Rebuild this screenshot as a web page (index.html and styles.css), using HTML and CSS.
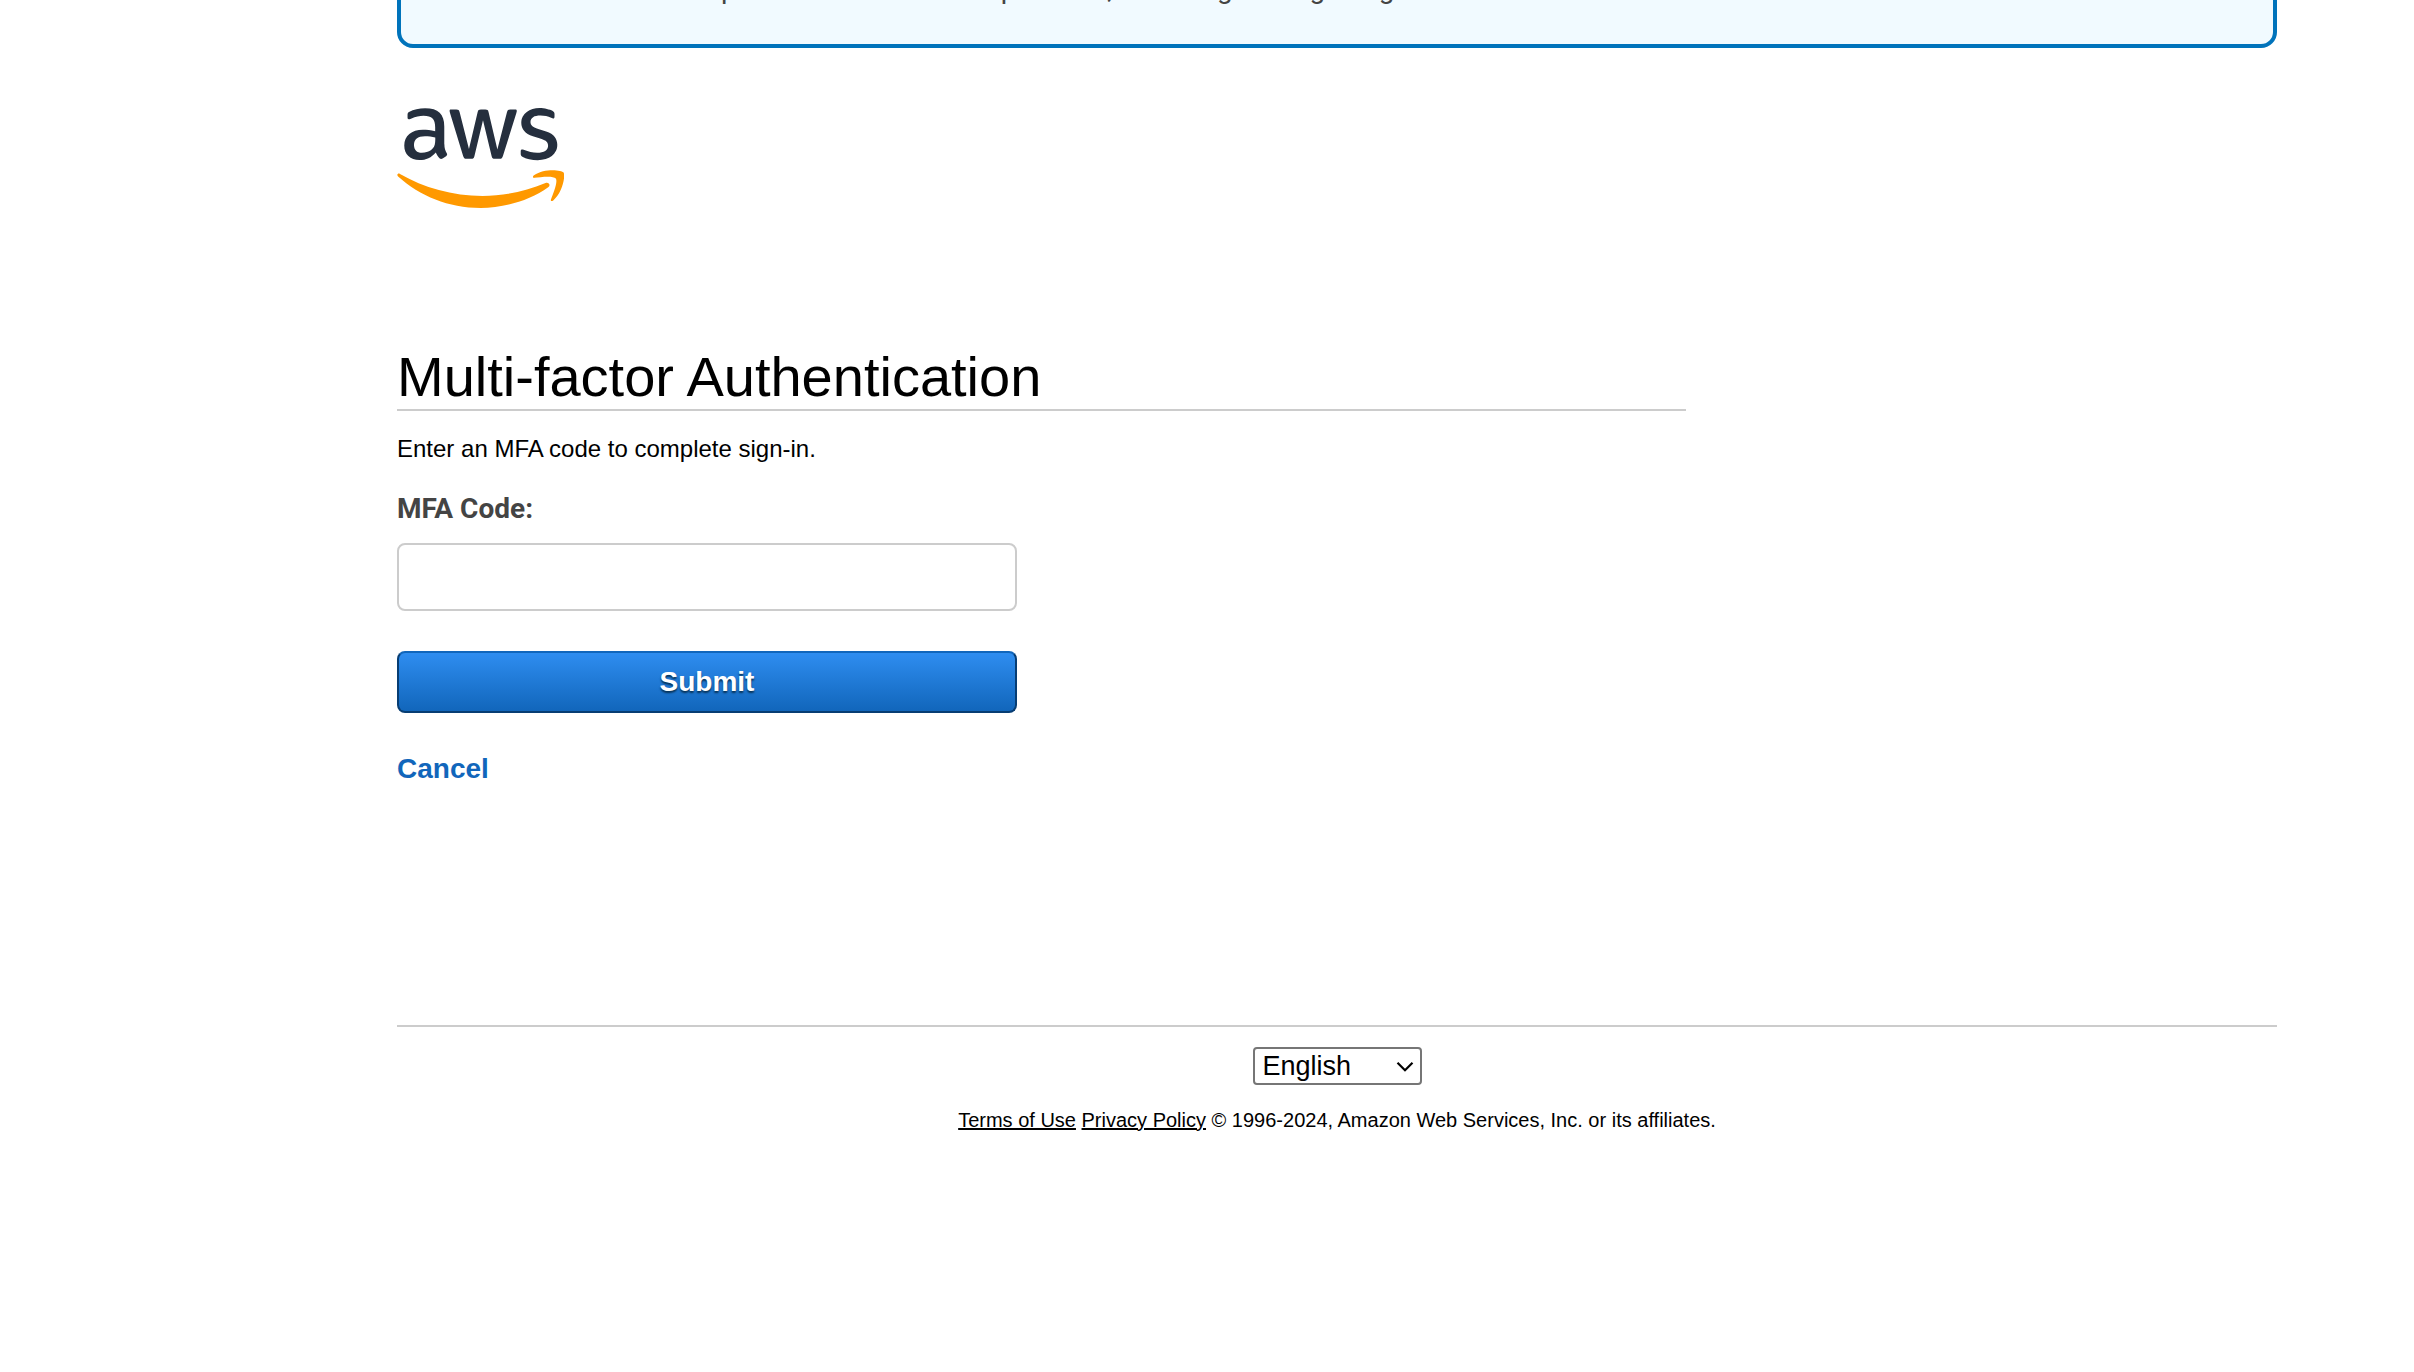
FILE: index.html
```html
<!DOCTYPE html>
<html lang="en">
<head>
<meta charset="utf-8">
<meta name="viewport" content="width=device-width, initial-scale=1">
<title>Multi-factor Authentication</title>
<link rel="stylesheet" href="styles.css">
</head>
<body>
<div class="page">
  <aside class="notice">
    <p class="notice-text">We continue to improve the AWS MFA experience, including setting the ground rules.</p>
  </aside>
  <header class="brand">
    <svg class="logo" viewBox="1 1 301 180" role="img" aria-label="aws">
      <g fill="#252f3e">
        <path d="M86.4,66.4c0,3.7,0.4,6.7,1.1,8.9c0.8,2.2,1.8,4.6,3.2,7.2c0.5,0.8,0.7,1.6,0.7,2.3c0,1-0.6,2-1.9,3l-6.3,4.2c-0.9,0.6-1.8,0.9-2.6,0.9c-1,0-2-0.5-3-1.4C76.2,90,75,88.4,74,86.8c-1-1.7-2-3.6-3.1-5.9c-7.8,9.2-17.6,13.8-29.4,13.8c-8.4,0-15.1-2.4-20-7.2c-4.9-4.8-7.4-11.2-7.4-19.2c0-8.5,3-15.4,9.1-20.6c6.1-5.2,14.2-7.8,24.5-7.8c3.4,0,6.9,0.3,10.6,0.8c3.7,0.5,7.5,1.3,11.5,2.2v-7.3c0-7.6-1.6-12.9-4.7-16c-3.2-3.1-8.6-4.6-16.3-4.6c-3.5,0-7.1,0.4-10.8,1.3c-3.7,0.9-7.3,2-10.8,3.4c-1.6,0.7-2.8,1.1-3.5,1.3c-0.7,0.2-1.2,0.3-1.6,0.3c-1.4,0-2.1-1-2.1-3.1v-4.9c0-1.6,0.2-2.8,0.7-3.5c0.5-0.7,1.4-1.4,2.8-2.1c3.5-1.8,7.7-3.3,12.6-4.5c4.9-1.3,10.1-1.9,15.6-1.9c11.9,0,20.6,2.7,26.2,8.1c5.5,5.4,8.3,13.6,8.3,24.6V66.4z M45.8,81.6c3.3,0,6.7-0.6,10.3-1.8c3.6-1.2,6.8-3.4,9.5-6.4c1.6-1.9,2.8-4,3.4-6.4c0.6-2.4,1-5.3,1-8.7v-4.2c-2.9-0.7-6-1.3-9.2-1.7c-3.2-0.4-6.3-0.6-9.4-0.6c-6.7,0-11.6,1.3-14.9,4c-3.3,2.7-4.9,6.5-4.9,11.5c0,4.7,1.2,8.2,3.7,10.6C37.7,80.4,41.2,81.6,45.8,81.6z"/>
        <path d="M126.1,92.4c-1.8,0-3-0.3-3.8-1c-0.8-0.6-1.5-2-2.1-3.9L96.7,10.2c-0.6-2-0.9-3.3-0.9-4c0-1.6,0.8-2.5,2.4-2.5h9.8c1.9,0,3.2,0.3,3.9,1c0.8,0.6,1.4,2,2,3.9l16.8,66.2l15.6-66.2c0.5-2,1.1-3.3,1.9-3.9c0.8-0.6,2.2-1,4-1h8c1.9,0,3.2,0.3,4,1c0.8,0.6,1.5,2,1.9,3.9l15.8,67l17.3-67c0.6-2,1.3-3.3,2-3.9c0.8-0.6,2.1-1,3.9-1h9.3c1.6,0,2.5,0.8,2.5,2.5c0,0.5-0.1,1-0.2,1.6c-0.1,0.6-0.3,1.4-0.7,2.5l-24.1,77.3c-0.6,2-1.3,3.3-2.1,3.9c-0.8,0.6-2.1,1-3.8,1h-8.6c-1.9,0-3.2-0.3-4-1c-0.8-0.7-1.5-2-1.9-4L156,23l-15.4,64.4c-0.5,2-1.1,3.3-1.9,4c-0.8,0.7-2.2,1-4,1H126.1z"/>
        <path d="M254.6,95.1c-5.2,0-10.4-0.6-15.4-1.8c-5-1.2-8.9-2.5-11.5-4c-1.6-0.9-2.7-1.9-3.1-2.8c-0.4-0.9-0.6-1.9-0.6-2.8v-5.1c0-2.1,0.8-3.1,2.3-3.1c0.6,0,1.2,0.1,1.8,0.3c0.6,0.2,1.5,0.6,2.5,1c3.4,1.5,7.1,2.7,11,3.5c4,0.8,7.9,1.2,11.9,1.2c6.3,0,11.2-1.1,14.6-3.3c3.4-2.2,5.2-5.4,5.2-9.5c0-2.8-0.9-5.1-2.7-7c-1.8-1.9-5.2-3.6-10.1-5.2L246,52c-7.3-2.3-12.7-5.7-16-10.2c-3.3-4.4-5-9.3-5-14.5c0-4.2,0.9-7.9,2.7-11.1c1.8-3.2,4.2-6,7.2-8.2c3-2.3,6.4-4,10.4-5.2c4-1.2,8.2-1.7,12.6-1.7c2.2,0,4.5,0.1,6.7,0.4c2.3,0.3,4.4,0.7,6.5,1.1c2,0.5,3.9,1,5.7,1.6c1.8,0.6,3.2,1.2,4.2,1.8c1.4,0.8,2.4,1.6,3,2.5c0.6,0.8,0.9,1.9,0.9,3.3v4.7c0,2.1-0.8,3.2-2.3,3.2c-0.8,0-2.1-0.4-3.8-1.2c-5.7-2.6-12.1-3.9-19.2-3.9c-5.7,0-10.2,0.9-13.3,2.8c-3.1,1.9-4.7,4.8-4.7,8.9c0,2.8,1,5.2,3,7.1c2,1.9,5.7,3.8,11,5.5l14.2,4.5c7.2,2.3,12.4,5.5,15.5,9.6c3.1,4.1,4.6,8.8,4.6,14c0,4.3-0.9,8.2-2.6,11.6c-1.8,3.4-4.2,6.4-7.3,8.8c-3.1,2.5-6.8,4.3-11.1,5.6C264.4,94.4,259.7,95.1,254.6,95.1z"/>
      </g>
      <g fill="#ff9900">
        <path d="M273.5,143.7c-32.9,24.3-80.7,37.2-121.8,37.2c-57.6,0-109.5-21.3-148.7-56.7c-3.1-2.8-0.3-6.6,3.4-4.4c42.4,24.6,94.7,39.5,148.8,39.5c36.5,0,76.6-7.6,113.5-23.2C274.2,133.6,278.9,139.7,273.5,143.7z"/>
        <path d="M287.2,128.1c-4.2-5.4-27.8-2.6-38.5-1.3c-3.2,0.4-3.7-2.4-0.8-4.5c18.8-13.2,49.7-9.4,53.3-5c3.6,4.5-1,35.4-18.6,50.2c-2.7,2.3-5.3,1.1-4.1-1.9C282.5,155.7,291.4,133.4,287.2,128.1z"/>
      </g>
    </svg>
  </header>
  <main class="content">
    <h1 class="title">Multi-factor Authentication</h1>
    <p class="intro">Enter an MFA code to complete sign-in.</p>
    <form class="form">
      <label class="label" for="mfa">MFA Code:</label>
      <input class="field" id="mfa" type="text" autocomplete="off">
      <button class="submit" type="submit">Submit</button>
    </form>
    <a class="cancel" href="#">Cancel</a>
  </main>
  <footer class="footer">
    <div class="language">
      <select class="select" aria-label="Language">
        <option>English</option>
        <option>Español</option>
        <option>Français</option>
      </select>
      <svg class="chevron" viewBox="0 0 18 12" aria-hidden="true"><path d="M1.5 1.8 9 9.3l7.500-7.500" fill="none" stroke="#000" stroke-width="2.200"/></svg>
    </div>
    <p class="legal"><a href="#">Terms of Use</a> <a href="#">Privacy Policy</a> © 1996-2024, Amazon Web Services, Inc. or its affiliates.</p>
  </footer>
</div>
</body>
</html>
```
FILE: styles.css
```css
* {
  box-sizing: border-box;
}

body {
  margin: 0;
  background: #fff;
  color: #000;
  font-family: "Liberation Sans", Arial, sans-serif;
}

.page {
  display: flow-root;
  padding: 0 137px 0 397px;
}

/* The notice is scrolled mostly out of view */
.notice {
  margin-top: -72px;
  padding: 40px 96px 38px;
  border: 4px solid #0073bb;
  border-radius: 16px;
  background: #f1faff;
}

.notice-text {
  margin: 0;
  color: #444;
  font-family: Roboto, sans-serif;
  font-size: 28px;
  line-height: 34px;
}

.brand {
  margin-top: 60px;
}

.logo {
  display: block;
  width: 167px;
  height: 100px;
}

.content {
  display: flex;
  flex-direction: column;
  align-items: flex-start;
  margin-top: 137px;
}

.title {
  width: 100%;
  max-width: 1289px;
  margin: 0;
  border-bottom: 2px solid #ccc;
  font-size: 56px;
  font-weight: 400;
  line-height: 64px;
}

.intro {
  margin: 24px 0 0;
  font-size: 24px;
  line-height: 28px;
}

.form {
  display: flex;
  flex-direction: column;
  width: 100%;
  max-width: 620px;
  margin-top: 30px;
}

.label {
  color: #444;
  font-family: Roboto, sans-serif;
  font-size: 28px;
  font-weight: 700;
  line-height: 32px;
}

.field {
  height: 68px;
  margin-top: 18px;
  padding: 0 16px;
  border: 2px solid #ccc;
  border-radius: 8px;
  background: #fff;
  font: inherit;
  font-size: 28px;
}

.submit {
  height: 62px;
  margin-top: 40px;
  padding: 0;
  border: 2px solid #073d73;
  border-top-color: #1166bb;
  border-radius: 8px;
  background: linear-gradient(#2e8df0, #1166bb);
  color: #fff;
  font: inherit;
  font-size: 28px;
  font-weight: 700;
  text-shadow: 0 2px 2px #073256;
}

.cancel {
  margin-top: 40px;
  color: #1166bb;
  font-size: 28px;
  font-weight: 700;
  line-height: 32px;
  text-decoration: none;
}

.footer {
  display: flex;
  flex-direction: column;
  align-items: center;
  margin-top: 240px;
  padding-top: 20px;
  border-top: 2px solid #ccc;
}

.language {
  position: relative;
}

.select {
  display: block;
  width: 169px;
  height: 38px;
  padding: 0 32px 0 8px;
  border: 2px solid #767676;
  border-radius: 4px;
  background: #fff;
  color: #000;
  font: inherit;
  font-size: 27px;
  line-height: 32px;
  appearance: none;
}

.chevron {
  position: absolute;
  top: 14px;
  right: 8px;
  width: 18px;
  height: 12px;
  pointer-events: none;
}

.legal {
  margin: 23px 0 0;
  font-size: 20px;
  line-height: 24px;
}

.legal a {
  color: inherit;
}
```
